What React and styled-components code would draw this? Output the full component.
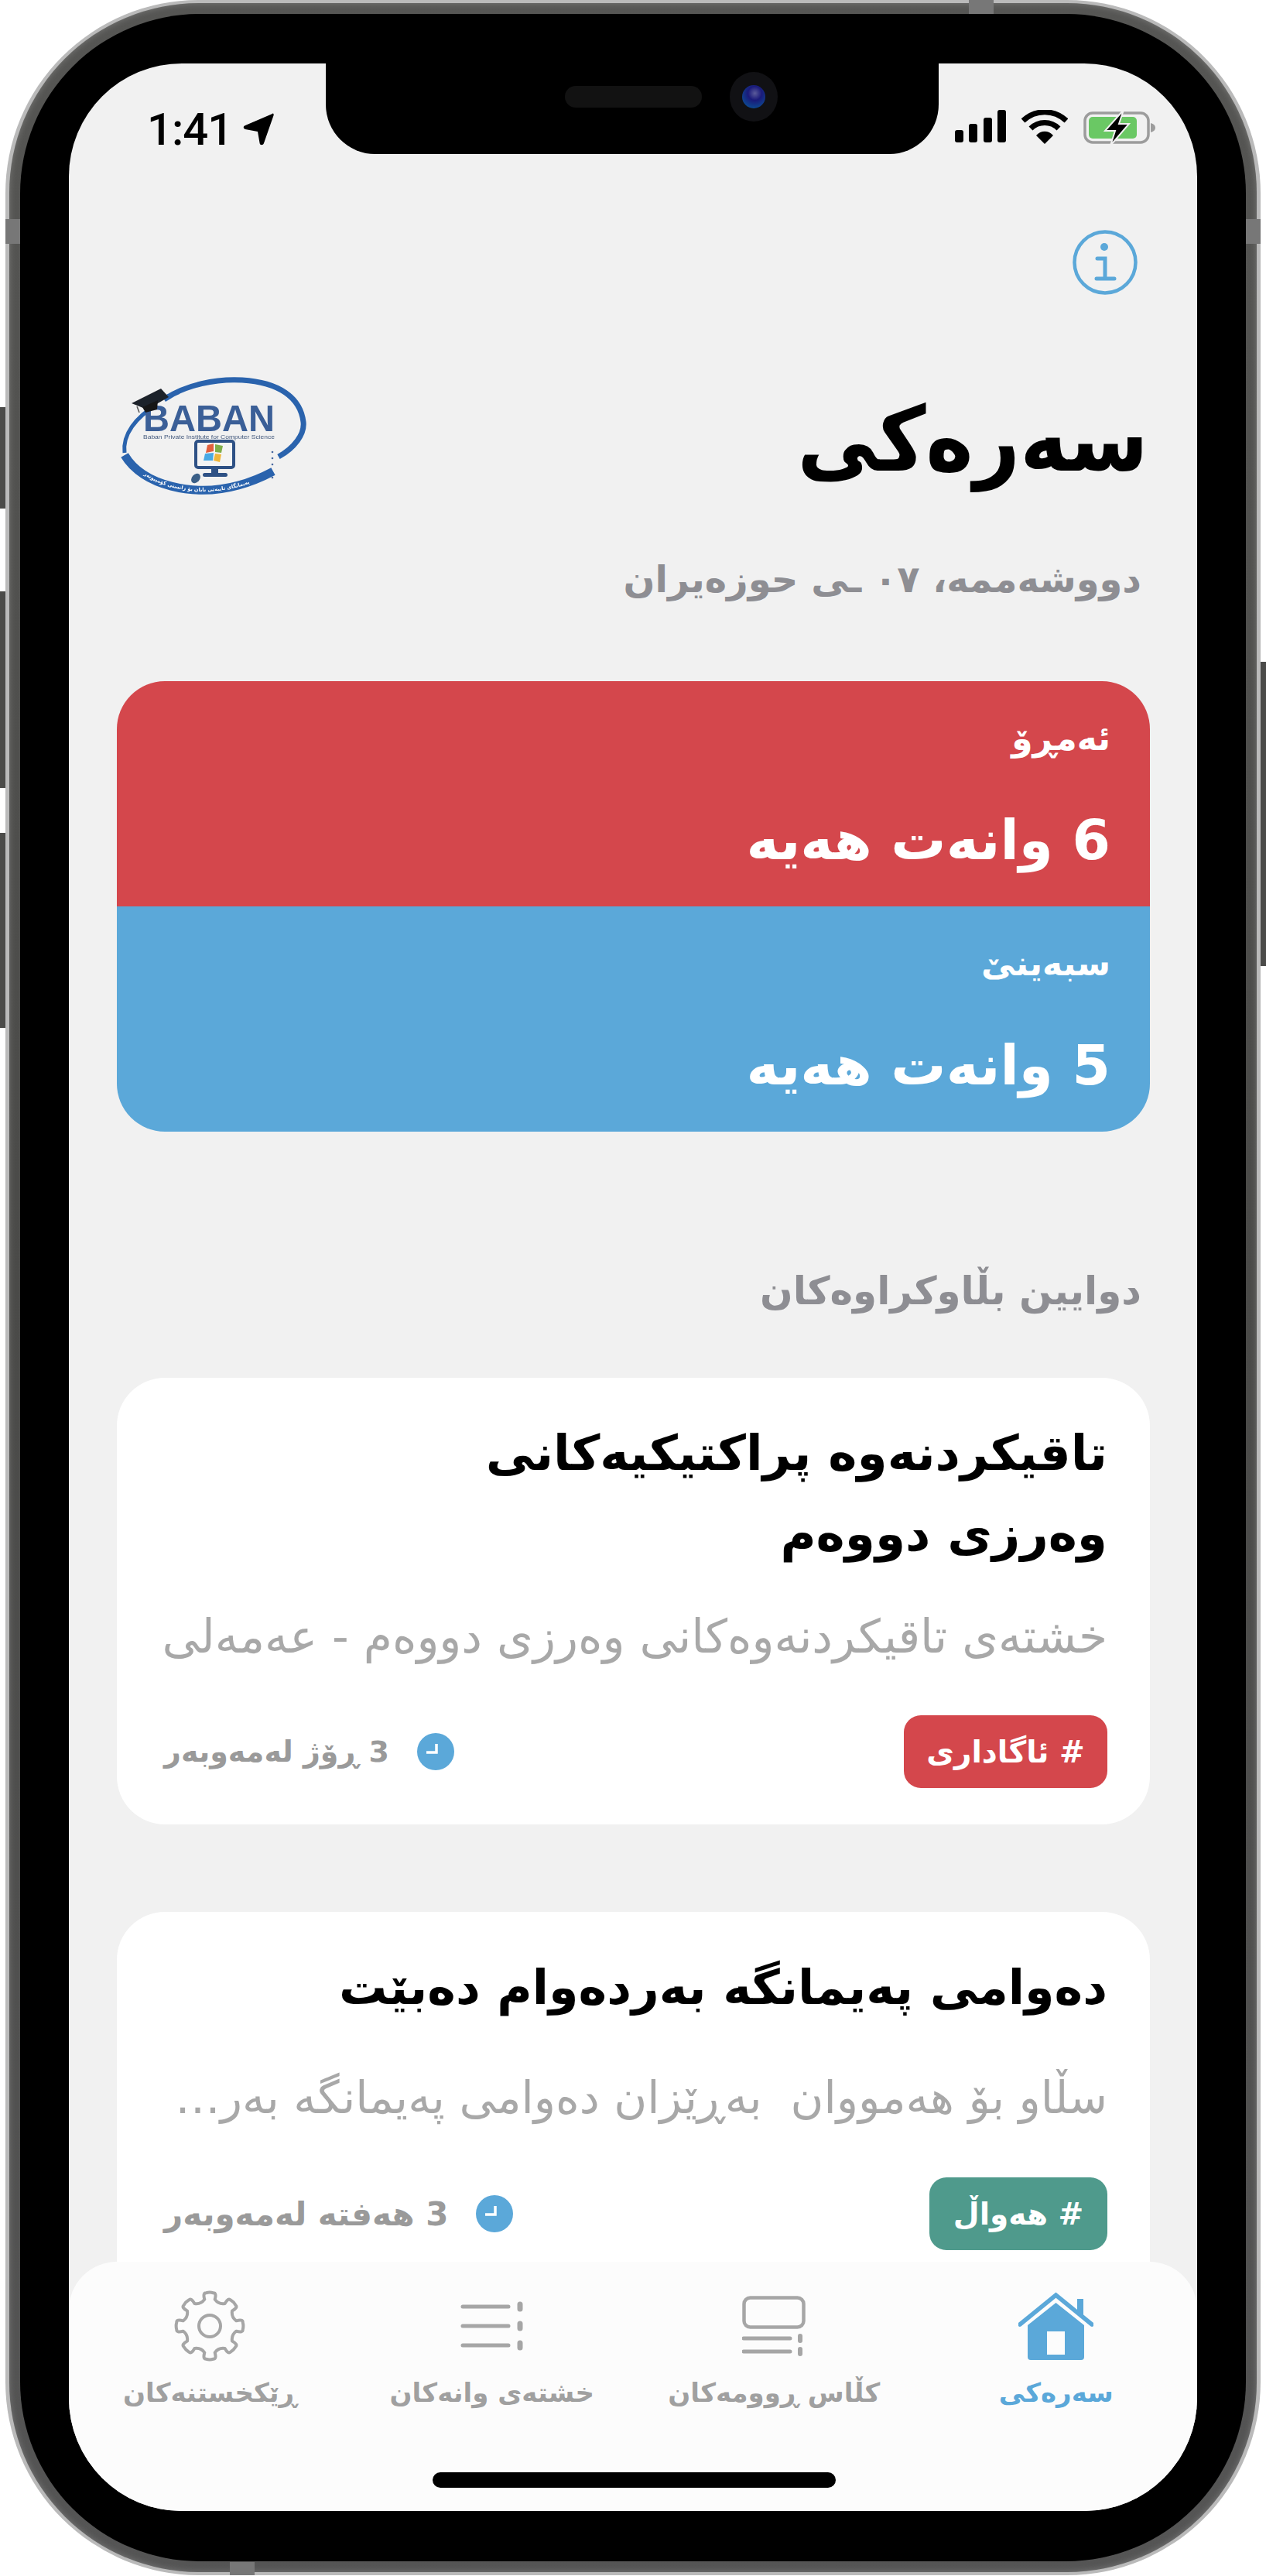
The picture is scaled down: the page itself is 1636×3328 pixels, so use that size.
import React from "react";
import styled, { createGlobalStyle } from "styled-components";

const GlobalStyle = createGlobalStyle`
  html, body {
    margin: 0;
    padding: 0;
    background: #fff;
  }
  * {
    box-sizing: border-box;
  }
`;

const KU_FONT = `"DejaVu Sans", "Noto Sans", sans-serif`;
const BLUE = "#5ba8d9";
const RED = "#d4474c";
const GREEN = "#4f9a8c";

const Page = styled.div`
  width: 1636px;
  height: 3328px;
  padding-left: 7px;
  overflow: hidden;
`;

const Phone = styled.div`
  position: relative;
  width: 1622px;
  height: 3327px;
  padding: 4px 5px;
  border-radius: 250px;
  background: #bababa;
`;

const Rim = styled.div`
  height: 100%;
  padding: 14px;
  border-radius: 245px;
  background: linear-gradient(180deg, #565654 0%, #4a4a48 50%, #555 100%);
  box-shadow: inset 0 0 8px rgba(255, 255, 255, 0.22);
`;

const Bezel = styled.div`
  height: 100%;
  padding: 64px 63px 65px;
  border-radius: 232px;
  background: #000;
`;

const SideKey = styled.span`
  position: absolute;
  width: 7px;
  top: ${(p) => p.$top}px;
  height: ${(p) => p.$height}px;
  ${(p) => (p.$right ? "right: -7px;" : "left: -7px;")}
  background: #4b4b49;
`;

const Band = styled.span`
  position: absolute;
  background: #777;
  ${(p) => p.$at}
`;

const Screen = styled.div`
  position: relative;
  height: 100%;
  border-radius: 146px;
  overflow: hidden;
  background: #f1f1f1;
  font-family: ${KU_FONT};
`;

const Notch = styled.div`
  position: absolute;
  z-index: 5;
  top: 0;
  left: 332px;
  width: 792px;
  height: 117px;
  padding: 11px 0 0 309px;
  display: flex;
  align-items: center;
  align-self: flex-start;
  gap: 36px;
  border-radius: 0 0 64px 64px;
  background: #000;
`;

const Sensors = styled.div`
  display: flex;
  align-items: center;
  gap: 36px;
  height: 64px;
  margin-top: -42px;
`;

const Speaker = styled.div`
  width: 177px;
  height: 28px;
  border-radius: 14px;
  background: #121212;
`;

const Camera = styled.div`
  width: 62px;
  height: 64px;
  border-radius: 50%;
  background: #111114;
  display: flex;
  align-items: center;
  justify-content: center;
  &::after {
    content: "";
    width: 30px;
    height: 30px;
    border-radius: 50%;
    background: radial-gradient(circle at 55% 35%, #5b5b9a 0%, #1a1a7a 35%, #0c4c92 80%, #0a2440 100%);
  }
`;

const StatusBar = styled.div`
  height: 117px;
  padding: 60px 53px 0 101px;
  display: flex;
  justify-content: space-between;
  align-items: flex-start;
  direction: ltr;
`;

const Clock = styled.div`
  display: flex;
  align-items: center;
  gap: 14px;
  height: 50px;
  font-family: Roboto, "Liberation Sans", sans-serif;
  font-weight: 500;
  font-size: 58px;
  line-height: 50px;
  letter-spacing: -1px;
  color: #000;
`;

const StatusIcons = styled.div`
  display: flex;
  align-items: flex-start;
  gap: 20px;
`;

const Content = styled.div`
  direction: rtl;
  padding: 0 61px 0 62px;
`;

const InfoRow = styled.div`
  margin-top: 98px;
  height: 84px;
  padding-right: 16px;
  display: flex;
`;

const HeadRow = styled.div`
  margin-top: 109px;
  height: 155px;
  display: flex;
  justify-content: space-between;
  align-items: center;
  padding-left: 9px;
`;

const Title = styled.h1`
  margin: 0;
  padding-right: 2px;
  font-family: "DejaVu Sans Condensed", "DejaVu Sans", sans-serif;
  font-size: 116px;
  line-height: 155px;
  font-weight: 700;
  color: #000;
`;

const DateLine = styled.div`
  margin-top: 68px;
  height: 70px;
  padding-right: 11px;
  font-size: 48px;
  line-height: 70px;
  font-weight: 700;
  color: #8e8e93;
`;

const Hero = styled.div`
  margin-top: 97px;
  border-radius: 62px;
  overflow: hidden;
`;

const HeroRow = styled.div`
  height: 291px;
  padding: 40px 51px 0 0;
  background: ${(p) => p.$bg};
  color: #fff;
  font-weight: 700;
`;

const HeroLabel = styled.div`
  height: 68px;
  font-size: 44px;
  line-height: 68px;
`;

const HeroValue = styled.div`
  margin-top: 58px;
  height: 80px;
  font-size: 71px;
  line-height: 80px;
`;

const SectionTitle = styled.div`
  margin-top: 171px;
  height: 70px;
  padding-right: 11px;
  font-size: 50px;
  line-height: 70px;
  font-weight: 700;
  color: #8e8e93;
`;

const Post = styled.article`
  margin-top: ${(p) => p.$gap}px;
  min-height: 577px;
  padding: ${(p) => p.$top}px 55px 0 55px;
  border-radius: 62px;
  background: #fff;
`;

const PostTitle = styled.h2`
  margin: 0;
  font-size: ${(p) => p.$size}px;
  line-height: 104px;
  font-weight: 700;
  color: #000;
  white-space: pre-line;
`;

const PostBody = styled.p`
  margin: ${(p) => p.$gap}px 0 0;
  height: 80px;
  font-size: ${(p) => p.$size}px;
  line-height: 80px;
  font-weight: 400;
  color: #a8a8a8;
  white-space: nowrap;
`;

const PostFooter = styled.div`
  margin-top: ${(p) => p.$gap}px;
  display: flex;
  justify-content: space-between;
  align-items: center;
  height: 94px;
`;

const Tag = styled.span`
  display: flex;
  align-items: center;
  justify-content: center;
  height: 94px;
  width: ${(p) => p.$width}px;
  border-radius: 22px;
  background: ${(p) => p.$bg};
  color: #fff;
  font-size: 39px;
  font-weight: 700;
`;

const Meta = styled.span`
  display: flex;
  align-items: center;
  gap: 36px;
  margin-left: 6px;
  font-size: ${(p) => p.$size}px;
  font-weight: 700;
  color: #9a9a9a;
`;

const TabBar = styled.nav`
  position: absolute;
  left: 0;
  right: 0;
  bottom: 0;
  height: 322px;
  padding-top: 36px;
  display: grid;
  grid-template-columns: repeat(4, 1fr);
  align-items: start;
  direction: rtl;
  border-radius: 62px 62px 0 0;
  background: #fcfcfc;
`;

const Tab = styled.div`
  display: flex;
  flex-direction: column;
  align-items: center;
  color: ${(p) => (p.$active ? BLUE : "#a0a0a0")};
  font-size: 34px;
  font-weight: 700;
`;

const TabIcon = styled.div`
  height: 94px;
  display: flex;
  align-items: center;
  justify-content: center;
  color: ${(p) => (p.$active ? BLUE : "#a6a6a6")};
`;

const TabLabel = styled.div`
  margin-top: 14px;
  height: 50px;
  line-height: 50px;
  white-space: nowrap;
`;

const HomeBar = styled.div`
  position: absolute;
  left: 470px;
  bottom: 30px;
  width: 521px;
  height: 20px;
  border-radius: 10px;
  background: #000;
`;

const LogoSvg = styled.svg`
  direction: ltr;
  overflow: visible;
`;

function LocationArrow() {
  return (
    <svg width="40" height="42" viewBox="0 0 40 42">
      <path d="M38 1 C39 0 40 1 39.600 3 L27 39 C26 42 22 42 21.600 39 L19 24 L3 21 C0 20 0 17 3 16 Z" fill="#000" />
    </svg>
  );
}

function SignalIcon() {
  return (
    <svg width="66" height="42" viewBox="0 0 66 42" fill="#000">
      <rect x="0" y="26" width="11" height="16" rx="3" />
      <rect x="18" y="18" width="11" height="24" rx="3" />
      <rect x="37" y="10" width="11" height="32" rx="3" />
      <rect x="55" y="0" width="11" height="42" rx="3" />
    </svg>
  );
}

function WifiIcon() {
  return (
    <svg width="60" height="44" viewBox="0 0 60 44">
      <path d="M2 14 C18 -1 42 -1 58 14" fill="none" stroke="#000" strokeWidth="7" />
      <path d="M12 24 C22 14 38 14 48 24" fill="none" stroke="#000" strokeWidth="7" />
      <path d="M19 33 C25 26 35 26 41 33 L30 44 Z" fill="#000" />
    </svg>
  );
}

function BatteryIcon() {
  return (
    <svg width="94" height="46" viewBox="0 0 94 46">
      <rect x="2" y="4" width="82" height="38" rx="10" fill="none" stroke="#9c9c9c" strokeWidth="3.500" />
      <rect x="7" y="9" width="62" height="28" rx="5" fill="#6ac864" />
      <path d="M87 17 C91 18 93 20 93 23 C93 26 91 28 87 29 Z" fill="#9c9c9c" />
      <path d="M52 0 L28 27 L41 27 L35 46 L59 18 L46 18 Z" fill="#000" stroke="#f1f1f1" strokeWidth="2" />
    </svg>
  );
}

function InfoIcon() {
  return (
    <svg width="84" height="84" viewBox="0 0 84 84" fill="none" stroke={BLUE} strokeWidth="4.500">
      <circle cx="42" cy="42" r="39.500" />
      <circle cx="41" cy="22" r="5" fill={BLUE} stroke="none" />
      <path d="M32 37 H42 V62 M31 63 H54" strokeLinecap="round" strokeWidth="5" />
    </svg>
  );
}

function BabanLogo() {
  return (
    <LogoSvg width="238" height="158" viewBox="0 0 238 158">
      <defs>
        <filter id="soft">
          <feGaussianBlur stdDeviation="0.500" />
        </filter>
        <path id="logoArc" d="M3 101 C25 138 90 156 148 140 C163 136 178 130 193 122" />
      </defs>
      <g filter="url(#soft)">
        <path d="M52 27 C80 8 120 0 153 2 C200 5 228 24 232 56 C234 72 220 90 200 101" fill="none" stroke="#2a63ad" strokeWidth="7" />
        <path d="M42 34 C16 50 -2 72 1 96" fill="none" stroke="#2a63ad" strokeWidth="5" />
        <path d="M1 99 C24 138 90 154 148 138 C163 134 178 128 193 120" fill="none" stroke="#2a63ad" strokeWidth="11" />
        <text fontSize="6.500" fill="#fff" fontFamily={KU_FONT} fontWeight="700" textAnchor="middle">
          <textPath href="#logoArc" startOffset="50%">پەیمانگای تایبەتی بابان بۆ زانستی کۆمپیوتەر</textPath>
        </text>
        <text x="25" y="68" fontFamily={`"Liberation Sans", sans-serif`} fontWeight="700" fontSize="48" textLength="170" lengthAdjust="spacingAndGlyphs" fill="#3a5f97">BABAN</text>
        <text x="25" y="78" fontFamily={`"Liberation Sans", sans-serif`} fontSize="6.500" textLength="170" lengthAdjust="spacingAndGlyphs" fill="#43597d">Baban Private Institute for Computer Science</text>
        <rect x="93" y="81" width="49" height="34" rx="3" fill="#f4f4f4" stroke="#2d5185" strokeWidth="4" />
        <rect x="113" y="115" width="9" height="8" fill="#2d5185" />
        <rect x="102" y="122" width="32" height="5" rx="2.500" fill="#2d5185" />
        <ellipse cx="93" cy="129" rx="5" ry="7" transform="rotate(40 93 129)" fill="#3a5f87" />
        <path d="M108 86 L116 84 L116 94 L106 96 Z" fill="#e2603c" />
        <path d="M118 85 L128 87 L126 96 L118 95 Z" fill="#7fae48" />
        <path d="M105 97 L116 96 L115 106 L103 106 Z" fill="#4aa9e4" />
        <path d="M118 97 L126 98 L124 108 L116 106 Z" fill="#f0b63a" />
        <path d="M10 32 L48 13 L58 24 L30 40 Z" fill="#1f232b" />
        <path d="M24 37 L28 44 L43 40 L44 28 Z" fill="#141619" />
        <path d="M17 36 L20 44" stroke="#555" strokeWidth="1.500" />
        <g fill="#4a6aa0">
          <circle cx="192" cy="95" r="1.300" />
          <circle cx="192" cy="103" r="1.300" />
          <circle cx="192" cy="111" r="1.300" />
          <circle cx="192" cy="128" r="1.300" />
        </g>
      </g>
    </LogoSvg>
  );
}

function ClockBadge() {
  return (
    <svg width="48" height="48" viewBox="0 0 48 48">
      <circle cx="24" cy="24" r="24" fill={BLUE} />
      <path d="M25 14 V25 H12" fill="none" stroke="#fff" strokeWidth="3.500" />
    </svg>
  );
}

function HomeIcon() {
  return (
    <svg width="97" height="88" viewBox="0 0 97 88">
      <path d="M2 42 L48.500 4 L95 42" fill="none" stroke={BLUE} strokeWidth="5.500" strokeLinecap="round" />
      <path d="M76 27 V9 H84 V32" fill={BLUE} />
      <path d="M48.500 14 L85 43 V84 Q85 88 81 88 H16 Q12 88 12 84 V43 Z" fill={BLUE} />
      <rect x="37" y="51" width="23" height="30" fill="#fcfcfc" />
    </svg>
  );
}

function ClassIcon() {
  return (
    <svg width="82" height="78" viewBox="0 0 82 78" fill="none" stroke="currentColor" strokeWidth="4.500" strokeLinecap="round">
      <rect x="2.500" y="2.500" width="77" height="38" rx="8" />
      <path d="M2 55 H62 M2 72 H62" strokeWidth="5" />
      <path d="M75 52 V58 M75 69 V75" strokeWidth="6" />
    </svg>
  );
}

function ListIcon() {
  return (
    <svg width="82" height="64" viewBox="0 0 82 64" fill="none" stroke="currentColor" strokeLinecap="round">
      <path d="M3 7 H62 M3 32 H62 M3 57 H62" strokeWidth="5" />
      <path d="M77 4 V10 M77 29 V35 M77 54 V60" strokeWidth="7" />
    </svg>
  );
}

// eight rounded teeth, one pointing straight up like the reference
function gearPath(cx, cy, outer, inner) {
  const at = (r, deg) => {
    const a = ((deg - 90) * Math.PI) / 180;
    return `${(cx + r * Math.cos(a)).toFixed(2)} ${(cy + r * Math.sin(a)).toFixed(2)}`;
  };
  let d = `M${at(inner, -11)}`;
  for (let i = 0; i < 8; i++) {
    const c = i * 45;
    d += ` Q${at(outer + 1, c - 12)} ${at(outer, c - 6)}`;
    d += ` Q${at(outer + 1, c)} ${at(outer, c + 6)}`;
    d += ` Q${at(outer + 1, c + 12)} ${at(inner, c + 11)}`;
    d += ` Q${at(inner - 5, c + 22.5)} ${at(inner, c + 34)}`;
  }
  return d + " Z";
}

function GearIcon() {
  return (
    <svg width="92" height="92" viewBox="0 0 92 92" fill="none" stroke="currentColor" strokeWidth="4">
      <path d={gearPath(46, 46, 43, 35)} strokeLinejoin="round" />
      <circle cx="46" cy="46" r="14" />
    </svg>
  );
}

const POSTS = [
  {
    gap: 77,
    top: 46,
    title: "تاقیکردنەوە پراکتیکیەکانی\nوەرزی دووەم",
    titleSize: 63,
    body: "خشتەی تاقیکردنەوەکانی وەرزی دووەم - عەمەلی",
    bodySize: 60,
    bodyGap: 40,
    footerGap: 62,
    tag: "# ئاگاداری",
    tagBg: RED,
    tagWidth: 263,
    when: "3 ڕۆژ لەمەوبەر",
    whenSize: 38,
  },
  {
    gap: 113,
    top: 46,
    title: "دەوامی پەیمانگە بەردەوام دەبێت",
    titleSize: 62,
    body: "سڵاو بۆ هەمووان \u00a0بەڕێزان دەوامی پەیمانگە بەر…",
    bodySize: 58.500,
    bodyGap: 50,
    footerGap: 63,
    tag: "# هەواڵ",
    tagBg: GREEN,
    tagWidth: 230,
    when: "3 هەفتە لەمەوبەر",
    whenSize: 42,
  },
];

const TABS = [
  { label: "سەرەکی", icon: <HomeIcon />, active: true },
  { label: "کڵاس ڕوومەکان", icon: <ClassIcon /> },
  { label: "خشتەی وانەکان", icon: <ListIcon /> },
  { label: "ڕێکخستنەکان", icon: <GearIcon /> },
];

export default function App() {
  return (
    <Page>
      <GlobalStyle />
      <Phone>
        <SideKey $top={526} $height={131} />
        <SideKey $top={764} $height={254} />
        <SideKey $top={1076} $height={252} />
        <SideKey $right $top={855} $height={393} />
        <Band $at="left: 0; top: 283px; width: 19px; height: 32px;" />
        <Band $at="right: 0; top: 283px; width: 19px; height: 32px;" />
        <Band $at="left: 1245px; top: 0; width: 32px; height: 18px;" />
        <Band $at="left: 290px; bottom: 0; width: 32px; height: 17px;" />
        <Rim>
          <Bezel>
            <Screen>
              <Notch>
                <Sensors>
                  <Speaker />
                  <Camera />
                </Sensors>
              </Notch>
              <StatusBar>
                <Clock>
                  1:41
                  <LocationArrow />
                </Clock>
                <StatusIcons>
                  <SignalIcon />
                  <WifiIcon />
                  <BatteryIcon />
                </StatusIcons>
              </StatusBar>
              <Content>
                <InfoRow>
                  <InfoIcon />
                </InfoRow>
                <HeadRow>
                  <Title>سەرەکی</Title>
                  <BabanLogo />
                </HeadRow>
                <DateLine>دووشەممە، ٠٧ ـی حوزەیران</DateLine>
                <Hero>
                  <HeroRow $bg={RED}>
                    <HeroLabel>ئەمڕۆ</HeroLabel>
                    <HeroValue>6 وانەت هەیە</HeroValue>
                  </HeroRow>
                  <HeroRow $bg={BLUE}>
                    <HeroLabel>سبەینێ</HeroLabel>
                    <HeroValue>5 وانەت هەیە</HeroValue>
                  </HeroRow>
                </Hero>
                <SectionTitle>دوایین بڵاوکراوەکان</SectionTitle>
                {POSTS.map((post) => (
                  <Post key={post.tag} $gap={post.gap} $top={post.top}>
                    <PostTitle $size={post.titleSize}>{post.title}</PostTitle>
                    <PostBody $gap={post.bodyGap} $size={post.bodySize}>{post.body}</PostBody>
                    <PostFooter $gap={post.footerGap}>
                      <Tag $bg={post.tagBg} $width={post.tagWidth}>{post.tag}</Tag>
                      <Meta $size={post.whenSize}>
                        <ClockBadge />
                        {post.when}
                      </Meta>
                    </PostFooter>
                  </Post>
                ))}
              </Content>
              <TabBar>
                {TABS.map((tab) => (
                  <Tab key={tab.label} $active={tab.active}>
                    <TabIcon $active={tab.active}>{tab.icon}</TabIcon>
                    <TabLabel>{tab.label}</TabLabel>
                  </Tab>
                ))}
              </TabBar>
              <HomeBar />
            </Screen>
          </Bezel>
        </Rim>
      </Phone>
    </Page>
  );
}
